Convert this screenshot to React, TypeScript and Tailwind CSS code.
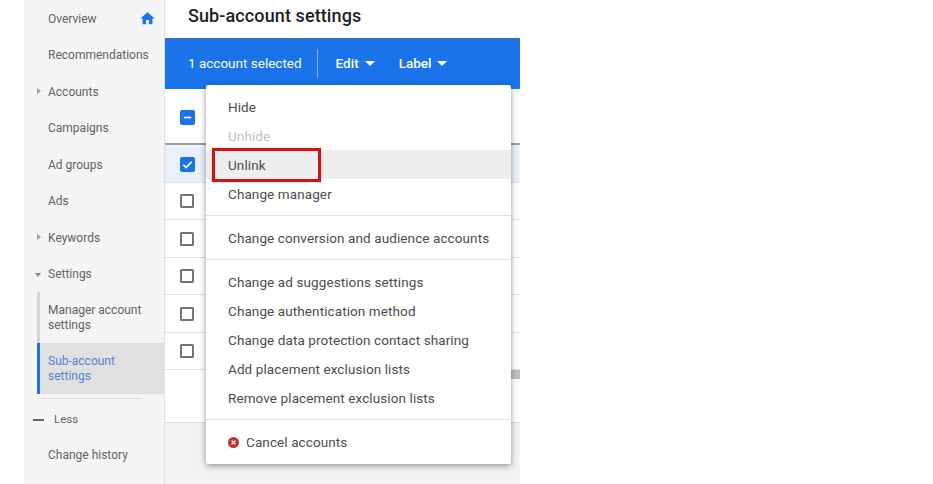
import React from "react";

const font = { fontFamily: "Roboto, sans-serif" };

const NavItem = ({ label, caret, children }: { label: string; caret?: "right" | "down"; children?: React.ReactNode }) => (
  <div className="relative flex h-[36.5px] items-center justify-between pl-[24px] pr-[8px] pt-[1px] text-[12px] text-[#5f6368]">
    {caret === "right" && (
      <span className="absolute left-[13px] top-[15px] h-0 w-0 border-y-[3.5px] border-l-[4px] border-y-transparent border-l-[#9aa0a6]" />
    )}
    {caret === "down" && (
      <span className="absolute left-[11px] top-[17px] h-0 w-0 border-x-[3.5px] border-t-[4px] border-x-transparent border-t-[#80868b]" />
    )}
    <span>{label}</span>
    {children}
  </div>
);

const Sidebar = () => (
  <aside className="h-full w-[141px] shrink-0 border-r border-[#e0e0e0] bg-[#f5f5f5]">
    <NavItem label="Overview">
      <svg viewBox="0 0 24 24" className="h-[17px] w-[17px] fill-[#1a73e8]">
        <path d="M10 20v-6h4v6h5v-8h3L12 3 2 12h3v8z" />
      </svg>
    </NavItem>
    <NavItem label="Recommendations" />
    <NavItem label="Accounts" caret="right" />
    <NavItem label="Campaigns" />
    <NavItem label="Ad groups" />
    <NavItem label="Ads" />
    <NavItem label="Keywords" caret="right" />
    <NavItem label="Settings" caret="down" />
    <div className="ml-[13px]">
      <div className="flex h-[51px] flex-col justify-center border-l-[3px] border-[#d5d5d5] pl-[8px] text-[12px] leading-[15px] text-[#5f6368]">
        <span>Manager account</span>
        <span>settings</span>
      </div>
      <div className="flex h-[51px] flex-col justify-center border-l-[3px] border-[#1a73e8] bg-[#e0e0e0] pl-[8px] text-[12px] leading-[15px] text-[#5a80d0]">
        <span>Sub-account</span>
        <span>settings</span>
      </div>
    </div>
    <div className="ml-[16px] mt-[4px] h-px w-[102px] bg-[#dcdcdc]" />
    <div className="flex h-[42px] items-center gap-[10px] pl-[9px] text-[11.5px] text-[#5f6368]">
      <span className="h-[2px] w-[11px] bg-[#5f6368]" />
      <span>Less</span>
    </div>
    <div className="pl-[24px] pt-[5px] text-[12px] text-[#5f6368]">Change history</div>
  </aside>
);

const Box = ({ state }: { state?: "minus" | "check" }) =>
  state ? (
    <span className="flex h-[15px] w-[15px] items-center justify-center rounded-[2px] bg-[#1a73e8]">
      <svg viewBox="0 0 14 14" className="h-[13px] w-[13px] fill-none stroke-white stroke-[1.8]">
        {state === "minus" ? <path d="M3 7h8" /> : <path d="M2.5 7.3l3 3 6-6.3" />}
      </svg>
    </span>
  ) : (
    <span className="h-[14px] w-[14px] rounded-[1.5px] border-2 border-[#757575]" />
  );

const Row = ({ selected }: { selected?: boolean }) => (
  <div className={`flex h-[37.5px] items-center border-b border-[#e0e0e0] pl-[15px] ${selected ? "bg-[#e8f0fe] pt-[2px]" : "bg-white pt-[1px]"}`}>
    <Box state={selected ? "check" : undefined} />
  </div>
);

const Caret = () => <span className="h-0 w-0 border-x-[5px] border-t-[5px] border-x-transparent border-t-white" />;

const MenuItem = ({ label, muted, active }: { label: string; muted?: boolean; active?: boolean }) => (
  <div className={`flex h-[29px] items-center pl-[22px] pt-[1px] text-[13.5px] tracking-[0.1px] ${muted ? "text-[#bdc1c6]" : "text-[#4a4d51]"} ${active ? "bg-[#eeeeee]" : ""}`}>
    {label}
  </div>
);

const Menu = () => (
  <div className="absolute left-[41px] top-[85px] w-[305px] rounded-[2px] bg-white shadow-[0_2px_6px_rgba(0,0,0,0.4)]">
    <div className="relative border-b border-[#e0e0e0] py-[7px]">
      <MenuItem label="Hide" />
      <MenuItem label="Unhide" muted />
      <MenuItem label="Unlink" active />
      <MenuItem label="Change manager" />
      <span className="absolute left-[6px] top-[63px] h-[34px] w-[109px] border-[3px] border-[#c8161b] shadow-[0_0_2px_rgba(0,0,0,0.3)]" />
    </div>
    <div className="border-b border-[#e0e0e0] py-[7px]">
      <MenuItem label="Change conversion and audience accounts" />
    </div>
    <div className="border-b border-[#e0e0e0] py-[7px]">
      <MenuItem label="Change ad suggestions settings" />
      <MenuItem label="Change authentication method" />
      <MenuItem label="Change data protection contact sharing" />
      <MenuItem label="Add placement exclusion lists" />
      <MenuItem label="Remove placement exclusion lists" />
    </div>
    <div className="pb-[8px] pt-[7px]">
      <div className="flex h-[29px] items-center gap-[7px] pl-[22px] pt-[1px] text-[13.5px] tracking-[0.1px] text-[#4a4d51]">
        <svg viewBox="0 0 12 12" className="h-[11px] w-[11px]">
          <circle cx="6" cy="6" r="6" fill="#c5302a" />
          <path d="M4 4l4 4M8 4l-4 4" stroke="#fff" strokeWidth="1.6" />
        </svg>
        <span>Cancel accounts</span>
      </div>
    </div>
  </div>
);

export default function App() {
  return (
    <div className="h-[484px] w-[933px] overflow-hidden bg-white" style={font}>
      <div className="flex h-full w-[520px] pl-[24px]">
        <Sidebar />
        <main className="relative flex h-full flex-1 flex-col">
          <h1 className="flex h-[38px] shrink-0 items-center pb-[8px] pl-[23px] text-[18px] font-medium tracking-[0.1px] text-[#202124]">
            Sub-account settings
          </h1>
          <div className="flex h-[51px] shrink-0 items-center border-t border-[#3f6fb5] bg-[#1a73e8] pb-[2px] pl-[23px] text-[13.5px] font-medium text-white">
            <span className="font-normal">1 account selected</span>
            <span className="ml-[15px] h-[29px] w-px bg-[#8ab4f0]" />
            <span className="ml-[18px]">Edit</span>
            <span className="ml-[6px] flex items-center"><Caret /></span>
            <span className="ml-[24px]">Label</span>
            <span className="ml-[6px] flex items-center"><Caret /></span>
          </div>
          <div className="flex h-[56px] shrink-0 items-center border-b-2 border-[#9e9e9e] pl-[15px] pt-[2px]">
            <Box state="minus" />
          </div>
          <Row selected />
          <Row />
          <Row />
          <Row />
          <Row />
          <Row />
          <div className="flex h-[53px] shrink-0 justify-end border-b border-[#dadce0] bg-white">
            <span className="h-[9px] w-[10px] bg-[#bdc1c6]" />
          </div>
          <div className="flex-1 bg-[#f1f3f4]" />
          <Menu />
        </main>
      </div>
    </div>
  );
}
